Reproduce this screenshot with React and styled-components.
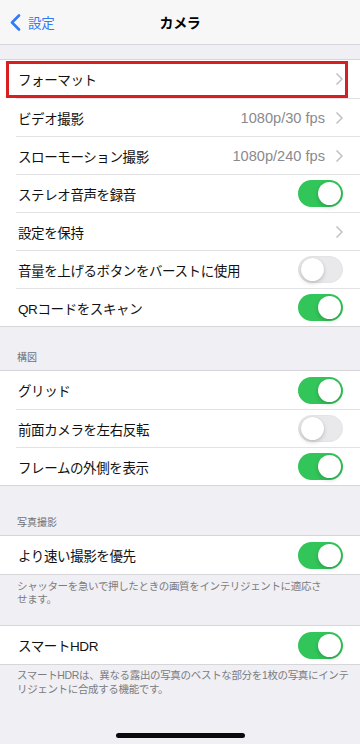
import React from "react";
import styled, { createGlobalStyle } from "styled-components";

const GlobalStyle = createGlobalStyle`
  html, body {
    margin: 0;
    padding: 0;
    background: #efeff4;
  }
  body {
    font-family: "Liberation Sans", "Noto Sans CJK JP", sans-serif;
    -webkit-font-smoothing: antialiased;
  }
`;

const Screen = styled.div`
  width: 360px;
  min-height: 744px;
  display: flex;
  flex-direction: column;
  background: #efeff4;
`;

const NavBar = styled.div`
  height: 45px;
  box-sizing: border-box;
  background: #f7f7f8;
  border-bottom: 1px solid #d8d8dc;
  display: grid;
  grid-template-columns: 1fr auto 1fr;
  align-items: center;
`;

const BackButton = styled.div`
  display: flex;
  align-items: center;
  gap: 7px;
  padding-left: 10px;
  color: #2f7cf6;
  font-size: 13.5px;
  letter-spacing: -0.3px;
`;

const Title = styled.div`
  font-size: 14px;
  font-weight: 700;
  color: #000;
  letter-spacing: -0.3px;
`;

const Group = styled.div`
  margin-top: ${(p) => p.$top || 0}px;
  background: #fff;
  border-top: 1px solid #d6d6da;
  border-bottom: 1px solid #d6d6da;
`;

const Row = styled.div`
  position: relative;
  height: 38px;
  box-sizing: border-box;
  padding-left: 16px;
  display: flex;
  align-items: center;

  & + & > div:first-child {
    border-top: 1px solid #e2e2e5;
  }
`;

const RowInner = styled.div`
  flex: 1;
  height: 100%;
  box-sizing: border-box;
  display: flex;
  align-items: center;
  justify-content: space-between;
  padding: 0 17px 0 2px;
`;

const Label = styled.span`
  font-size: 13.5px;
  letter-spacing: -0.4px;
  color: #111;
`;

const Trailing = styled.div`
  display: flex;
  align-items: center;
  gap: 11px;
`;

const Value = styled.span`
  font-size: 14.6px;
  color: #8a8a8e;
`;

const Highlight = styled.div`
  position: absolute;
  left: 6px;
  right: 12px;
  top: 1px;
  bottom: 0px;
  border: 3.5px solid #d81f1f;
  pointer-events: none;
`;

const SwitchTrack = styled.div`
  width: 45px;
  height: 27px;
  box-sizing: border-box;
  border-radius: 14px;
  background: ${(p) => (p.$on ? "#32c559" : "#e9e9eb")};
  border: ${(p) => (p.$on ? "none" : "1.5px solid #e3e3e6")};
  display: flex;
  align-items: center;
  justify-content: ${(p) => (p.$on ? "flex-end" : "flex-start")};
  padding: 2px;
`;

const Knob = styled.div`
  width: 23px;
  height: 23px;
  border-radius: 50%;
  background: #fff;
  box-shadow: 0 2px 4px rgba(0, 0, 0, 0.18), 0 0 1px rgba(0, 0, 0, 0.15);
`;

const SectionHeader = styled.div`
  padding: ${(p) => p.$top}px 17px 5px;
  font-size: 10px;
  line-height: 14px;
  color: #707075;
`;

const Footer = styled.div`
  padding: ${(p) => p.$top}px 0 ${(p) => p.$bottom}px 17px;
  font-size: 10.5px;
  line-height: ${(p) => p.$lh}px;
  color: #7c7c81;
  letter-spacing: -0.35px;
`;

const FooterLine = styled.span`
  display: block;
  white-space: nowrap;
`;

const Spacer = styled.div`
  flex: 1;
`;

const HomeIndicator = styled.div`
  align-self: center;
  width: 129px;
  height: 5px;
  border-radius: 3px;
  background: #0b0b0b;
  margin-bottom: 6px;
`;

const Chevron = () => (
  <svg width="7" height="12" viewBox="0 0 7 12">
    <polyline
      points="1,1 6,6 1,11"
      fill="none"
      stroke="#c4c4c8"
      strokeWidth="1.7"
      strokeLinecap="round"
      strokeLinejoin="round"
    />
  </svg>
);

const BackChevron = () => (
  <svg width="11" height="17" viewBox="0 0 11 17">
    <polyline
      points="9,1.5 2,8.5 9,15.5"
      fill="none"
      stroke="#2f7cf6"
      strokeWidth="2.6"
      strokeLinecap="round"
      strokeLinejoin="round"
    />
  </svg>
);

const Switch = ({ on }) => (
  <SwitchTrack $on={on}>
    <Knob />
  </SwitchTrack>
);

const SettingRow = ({ label, value, chevron, toggle, highlight }) => (
  <Row>
    <RowInner>
      <Label>{label}</Label>
      <Trailing>
        {value && <Value>{value}</Value>}
        {chevron && <Chevron />}
        {toggle !== undefined && <Switch on={toggle} />}
      </Trailing>
    </RowInner>
    {highlight && <Highlight />}
  </Row>
);

const App = () => {
  return (
    <Screen>
      <GlobalStyle />
      <NavBar>
        <BackButton>
          <BackChevron />
          <span>設定</span>
        </BackButton>
        <Title>カメラ</Title>
        <div />
      </NavBar>

      <Group $top={14}>
        <SettingRow label="フォーマット" chevron highlight />
        <SettingRow label="ビデオ撮影" value="1080p/30 fps" chevron />
        <SettingRow label="スローモーション撮影" value="1080p/240 fps" chevron />
        <SettingRow label="ステレオ音声を録音" toggle={true} />
        <SettingRow label="設定を保持" chevron />
        <SettingRow label="音量を上げるボタンをバーストに使用" toggle={false} />
        <SettingRow label="QRコードをスキャン" toggle={true} />
      </Group>

      <SectionHeader $top={24}>構図</SectionHeader>
      <Group>
        <SettingRow label="グリッド" toggle={true} />
        <SettingRow label="前面カメラを左右反転" toggle={false} />
        <SettingRow label="フレームの外側を表示" toggle={true} />
      </Group>

      <SectionHeader $top={30}>写真撮影</SectionHeader>
      <Group>
        <SettingRow label="より速い撮影を優先" toggle={true} />
      </Group>
      <Footer $top={5} $bottom={19} $lh={13}>
        <FooterLine>シャッターを急いで押したときの画質をインテリジェントに適応さ</FooterLine>
        <FooterLine>せます。</FooterLine>
      </Footer>

      <Group>
        <SettingRow label="スマートHDR" toggle={true} />
      </Group>
      <Footer $top={3} $bottom={0} $lh={14}>
        <FooterLine>スマートHDRは、異なる露出の写真のベストな部分を1枚の写真にインテ</FooterLine>
        <FooterLine>リジェントに合成する機能です。</FooterLine>
      </Footer>

      <Spacer />
      <HomeIndicator />
    </Screen>
  );
};

export default App;
